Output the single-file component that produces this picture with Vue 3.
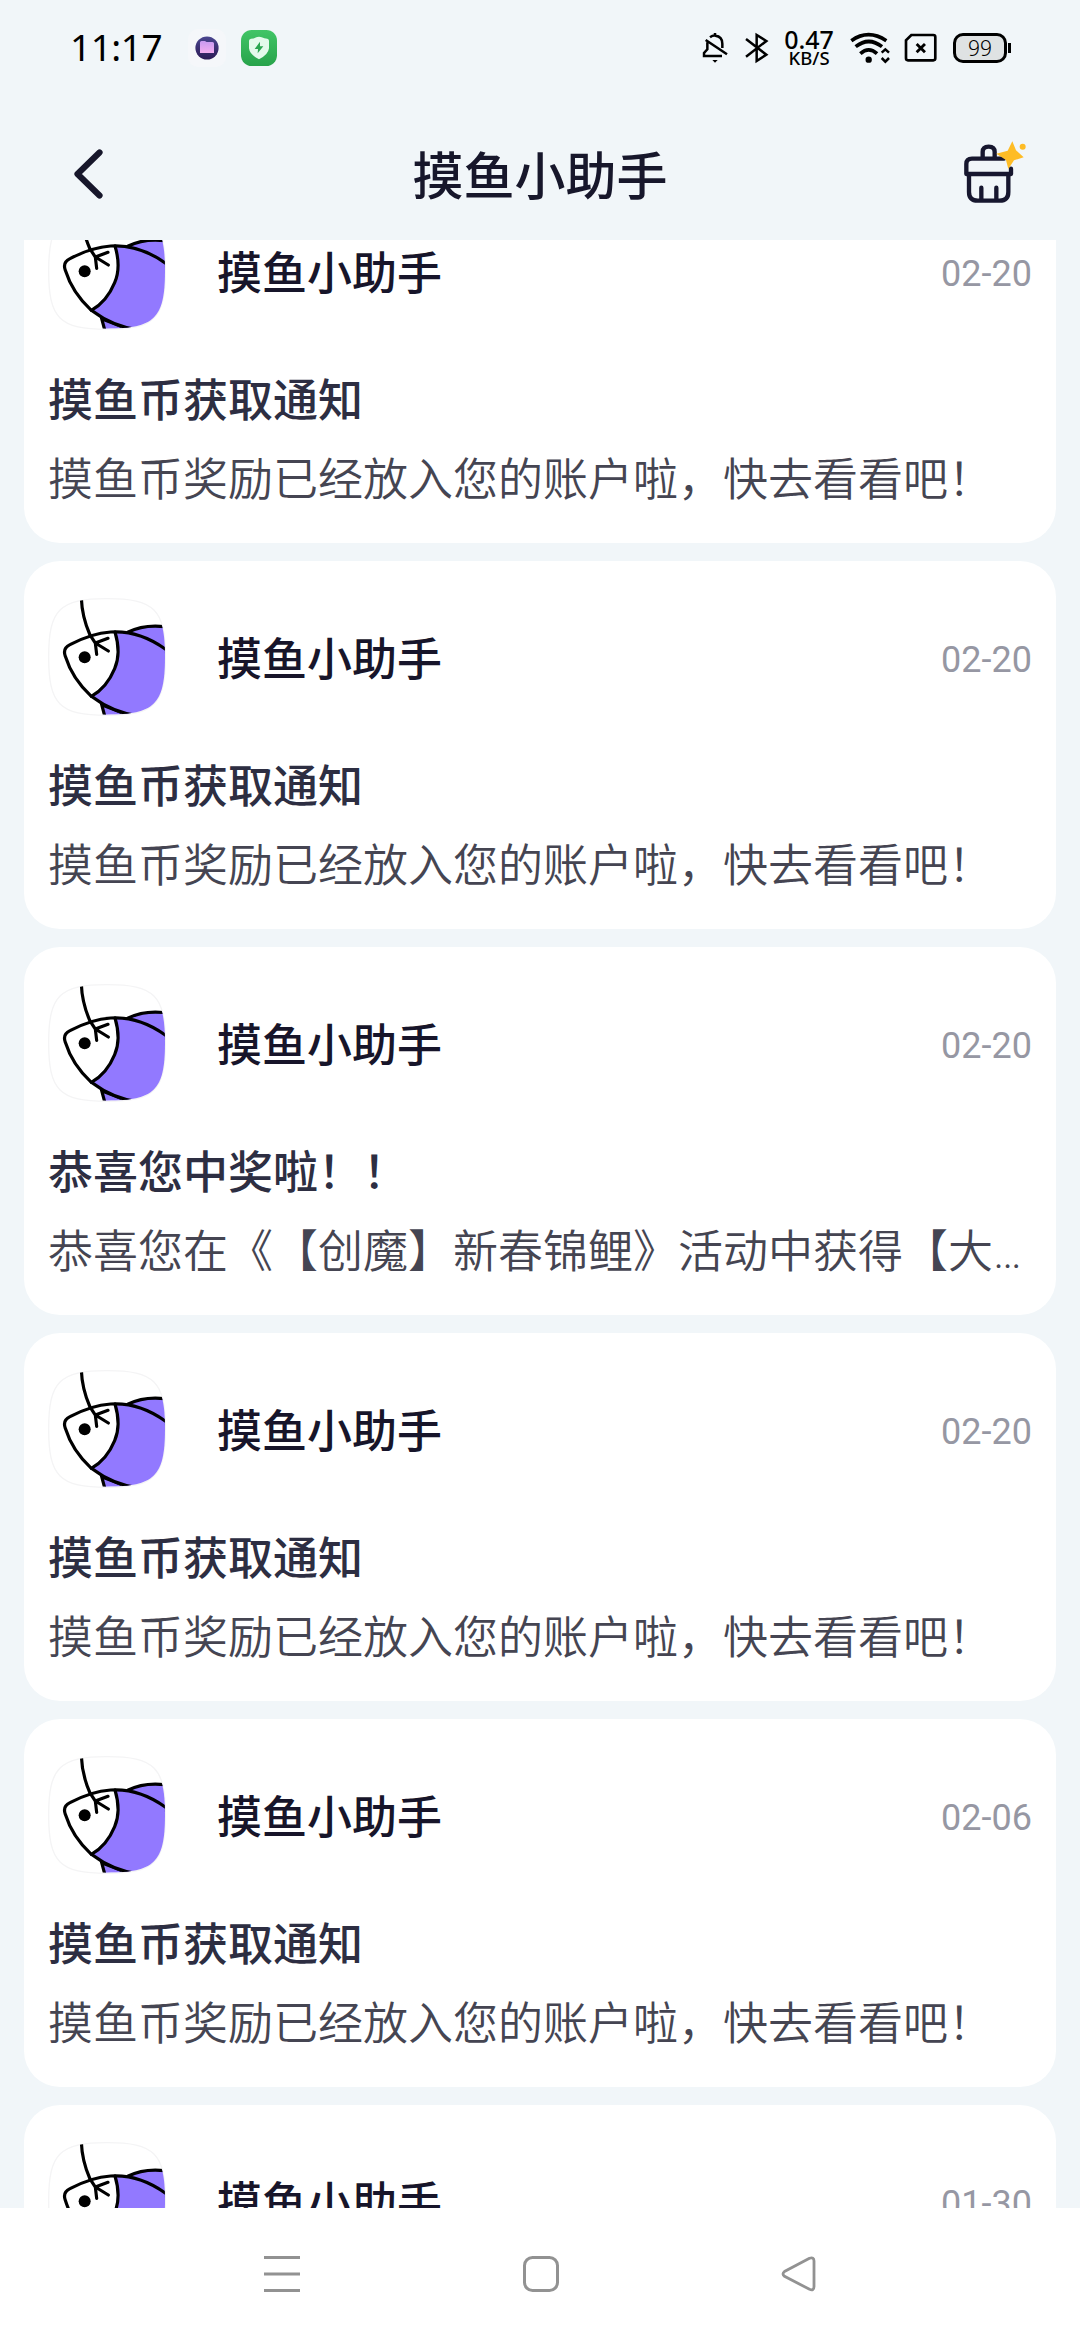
<script setup>
const reward = { title: '摸鱼币获取通知', body: '摸鱼币奖励已经放入您的账户啦，快去看看吧！' }
const messages = [
  { id: 1, date: '02-20', ...reward },
  { id: 2, date: '02-20', ...reward },
  { id: 3, date: '02-20', title: '恭喜您中奖啦！！', body: '恭喜您在《【创魔】新春锦鲤》活动中获得【大…' },
  { id: 4, date: '02-20', ...reward },
  { id: 5, date: '02-06', ...reward },
  { id: 6, date: '01-30', ...reward },
]
</script>

<template>
  <div class="screen">
    <div class="status">
      <div class="status-left">
        <span class="time">11:17</span>
        <svg class="app-dot" viewBox="0 0 38 38">
          <defs>
            <linearGradient id="dotBg" x1="0" y1="0" x2="0" y2="1"><stop offset="0" stop-color="#4a4690" /><stop offset="1" stop-color="#2c1a56" /></linearGradient>
            <linearGradient id="dotFg" x1="0" y1="0" x2="0" y2="1"><stop offset="0" stop-color="#c79af0" /><stop offset="1" stop-color="#f3aef0" /></linearGradient>
          </defs>
          <rect width="38" height="38" rx="10" fill="#f5f7fa" />
          <circle cx="19" cy="19" r="11.6" fill="url(#dotBg)" />
          <path d="M12 13.5q0-1.5 1.500-1.500h3.500l1.500 1h6q1.500 0 1.500 1.500V24H12z" fill="url(#dotFg)" />
        </svg>
        <svg class="shield" viewBox="0 0 108 108">
          <defs>
            <linearGradient id="shieldBg" x1="0" y1="0" x2="0" y2="1"><stop offset="0" stop-color="#41c566" /><stop offset="1" stop-color="#28a34b" /></linearGradient>
          </defs>
          <rect width="108" height="108" rx="32" fill="url(#shieldBg)" />
          <path d="M54 20Q59 20 62 22Q70 26 79 26Q84 27 84 32V55Q82 74 54 88Q26 74 24 55V32Q24 27 30 26Q38 26 46 22Q49 20 54 20z" fill="#e4faeb" />
          <path d="M57 35L41 57H51L50 70L67 49H57z" fill="#2ba650" />
        </svg>
      </div>
      <div class="status-right">
        <svg class="bell" viewBox="58 66 80 94" fill="none" stroke="#000" stroke-width="7.500">
          <path d="M97 69v7M82 82Q90 76 98 77Q119 79 119 101V114M74 97V118L64 129V138H118M69 90L133 133" />
          <path d="M89 150H105L97 158z" fill="#000" stroke="none" />
        </svg>
        <svg class="bt" viewBox="188 66 72 94" fill="none" stroke="#000" stroke-width="7.500">
          <path d="M191 87L252 134L223 153V75L252 93L191 140" />
        </svg>
        <div class="speed"><span class="rate">0.47</span><span class="unit">KB/S</span></div>
        <svg class="wifi" viewBox="508 66 122 96" fill="none" stroke="#000">
          <path d="M512 92Q563 56 617 92M525 110Q564 79 604 110M539 131Q564 108 589 131" stroke-width="11" />
          <circle cx="564" cy="149" r="9.500" fill="#000" stroke="none" />
          <path d="M603 128L614 118L625 128M603 144L614 155L625 144" stroke-width="7.500" />
        </svg>
        <svg class="sim" viewBox="670 70 100 88" fill="none" stroke="#000" stroke-width="8">
          <path d="M692 76H758Q764 76 764 82V146Q764 152 758 152H682Q676 152 676 146V92z" />
          <path d="M708 103L733 128M733 103L708 128" stroke-width="8.500" />
        </svg>
        <div class="battery"><span class="level">99</span><span class="nub"></span></div>
      </div>
    </div>

    <header class="bar">
      <svg class="back" viewBox="0 0 36 54" fill="none" stroke="#17172b" stroke-width="6.200" stroke-linecap="round" stroke-linejoin="round">
        <path d="M29.500 5.500L7.500 27L29.500 48.500" />
      </svg>
      <h1 class="heading">摸鱼小助手</h1>
      <svg class="clean" viewBox="100 60 192 192" fill="none" stroke="#17172f" stroke-width="13" stroke-linejoin="round" stroke-linecap="round">
        <path d="M159 113V96Q159 80 177 80Q195 80 195 96V113" />
        <path d="M244 146V162H110V132Q110 116 127 116H222" />
        <path d="M118 163V216Q118 242 144 242H210Q236 242 236 216V163M155 203V240M200 203V240" />
        <path d="M248 64L259 91L282 112L253 121L236 147L229 120L200 101L234 92z" fill="#febc25" stroke="none" />
        <circle cx="279" cy="80" r="9" fill="#febc25" stroke="none" />
      </svg>
    </header>

    <main class="list">
      <article v-for="m in messages" :key="m.id" class="card">
        <div class="sender">
          <svg class="avatar" viewBox="55 55 354 354">
            <defs>
              <clipPath :id="'tile' + m.id"><path d="M57 232C57 90 90 57 232 57S406 90 406 232S374 405 232 405S57 374 57 232z" /></clipPath>
            </defs>
            <path d="M57 232C57 90 90 57 232 57S407 90 407 232S374 407 232 407S57 374 57 232z" fill="#fff" stroke="#f4f4f5" stroke-width="4" />
            <g :clip-path="`url(#tile${m.id})`" fill="none" stroke="#000" stroke-width="9.500" stroke-linecap="round">
              <path d="M296 157Q345 132 415 142V220L296 190z" fill="#9279ff" />
              <path d="M216 375L226 412H310z" fill="#9279ff" />
              <path d="M256 157Q340 153 420 218V420H330Q255 402 185 350Q247 318 264 245Q270 200 256 157z" fill="#9279ff" stroke="none" />
              <path d="M420 218Q335 151 243 157Q185 161 121 195Q98 206 107 230Q128 298 185 350Q255 402 330 409" />
              <path d="M256 157Q275 220 255 267Q231 325 185 350" />
              <path d="M155 55Q157 112 181 166L197 190L201 224M197 190L235 176M197 190L236 214" />
              <circle cx="165" cy="233" r="18" fill="#000" stroke="none" />
            </g>
          </svg>
          <span class="name">摸鱼小助手</span>
          <time class="date">{{ m.date }}</time>
        </div>
        <h2 class="title">{{ m.title }}</h2>
        <p class="body">{{ m.body }}</p>
      </article>
    </main>

    <nav class="nav">
      <svg viewBox="0 0 36 36" stroke="#929292" stroke-width="3"><path d="M0 1.500H36M0 18H36M0 34.500H36" /></svg>
      <svg viewBox="0 0 36 36" fill="none" stroke="#929292" stroke-width="3"><rect x="1.500" y="1.500" width="33" height="33" rx="8" /></svg>
      <svg viewBox="0 0 36 36" fill="none" stroke="#929292" stroke-width="2.800"><path d="M28.500 2.300L3.500 15.500Q0.500 18 3.500 20.300L28.500 33.300Q33 35 33 30.500V5Q33 0.700 28.500 2.300z" /></svg>
    </nav>
  </div>
</template>

<style>
body { margin: 0; overflow: hidden; }
</style>

<style scoped>
.screen {
  display: flex;
  flex-direction: column;
  width: 1080px;
  height: 2340px;
  overflow: hidden;
  background: #f1f6f9;
  font-family: Roboto, "Noto Sans CJK SC", sans-serif;
  text-spacing-trim: space-all;
}
svg { display: block; flex: none; }
.status {
  flex: none;
  display: flex;
  justify-content: space-between;
  height: 96px;
  padding: 0 69px 0 70px;
  box-sizing: border-box;
  color: #000;
}
.status-left, .status-right { display: flex; align-items: center; }
.time {
  width: 118px;
  padding-bottom: 2px;
  font: 400 37px/50px "Noto Sans", sans-serif;
  letter-spacing: -0.5px;
}
.app-dot { width: 38px; height: 38px; }
.shield { width: 36px; height: 36px; margin-left: 15px; }
.bell { width: 26.700px; height: 31.300px; }
.bt { width: 24px; height: 31.300px; margin-left: 16px; }
.speed {
  display: flex;
  flex-direction: column;
  align-items: center;
  width: 52px;
  margin: 0 15px 0 14px;
}
.rate { font: 500 25px/19px "Noto Sans", sans-serif; }
.unit { font: 500 18.500px/17px "Noto Sans", sans-serif; }
.wifi { width: 40.700px; height: 32px; }
.sim { width: 33.300px; height: 29.300px; margin: 0 16px 0 13px; }
.battery { display: flex; align-items: center; }
.level {
  width: 54px;
  height: 30px;
  box-sizing: border-box;
  border: 3px solid #000;
  border-radius: 10px;
  background: #dfe2e3;
  font: 300 21px/24px "Noto Sans", sans-serif;
  text-align: center;
}
.nub { width: 3px; height: 10px; margin-left: 1px; background: #000; }
.bar {
  flex: none;
  display: grid;
  grid-template-columns: 64px 1fr 64px;
  align-items: center;
  height: 144px;
  padding: 14px 53px 0 70px;
  box-sizing: border-box;
}
.back { width: 36px; height: 54px; margin-bottom: 2px; }
.heading { margin: 5px 17px 0 0; text-align: center; font-size: 51px; line-height: 70px; font-weight: 500; color: #17172b; }
.clean { width: 64px; height: 64px; margin-bottom: 6px; }
.list {
  flex: 1;
  min-height: 0;
  display: flex;
  flex-direction: column;
  justify-content: flex-start;
  gap: 18px;
  padding: 0 24px;
  overflow: hidden;
}
.card {
  flex: none;
  height: 368px;
  padding: 37px 24px 0;
  box-sizing: border-box;
  border-radius: 36px;
  background: #fff;
}
.card:first-child { margin-top: -65px; }
.sender { display: flex; align-items: center; height: 118px; }
.avatar { width: 118px; height: 118px; }
.name { flex: 1; margin: 7px 0 0 51px; font-size: 45px; line-height: 64px; font-weight: 500; color: #17152a; }
.date { margin-top: 5px; font-size: 36px; line-height: 48px; color: #9697a3; }
.title { margin: 40px 0 0; font-size: 45px; line-height: 64px; font-weight: 500; color: #2d2e42; }
.body { margin: 15px 0 0; font-size: 45px; line-height: 64px; font-weight: 350; color: #454552; white-space: nowrap; }
.nav {
  flex: none;
  display: flex;
  justify-content: space-between;
  height: 132px;
  padding: 48px 263px 0 264px;
  box-sizing: border-box;
  background: #fff;
}
.nav svg { width: 36px; height: 36px; }
</style>
